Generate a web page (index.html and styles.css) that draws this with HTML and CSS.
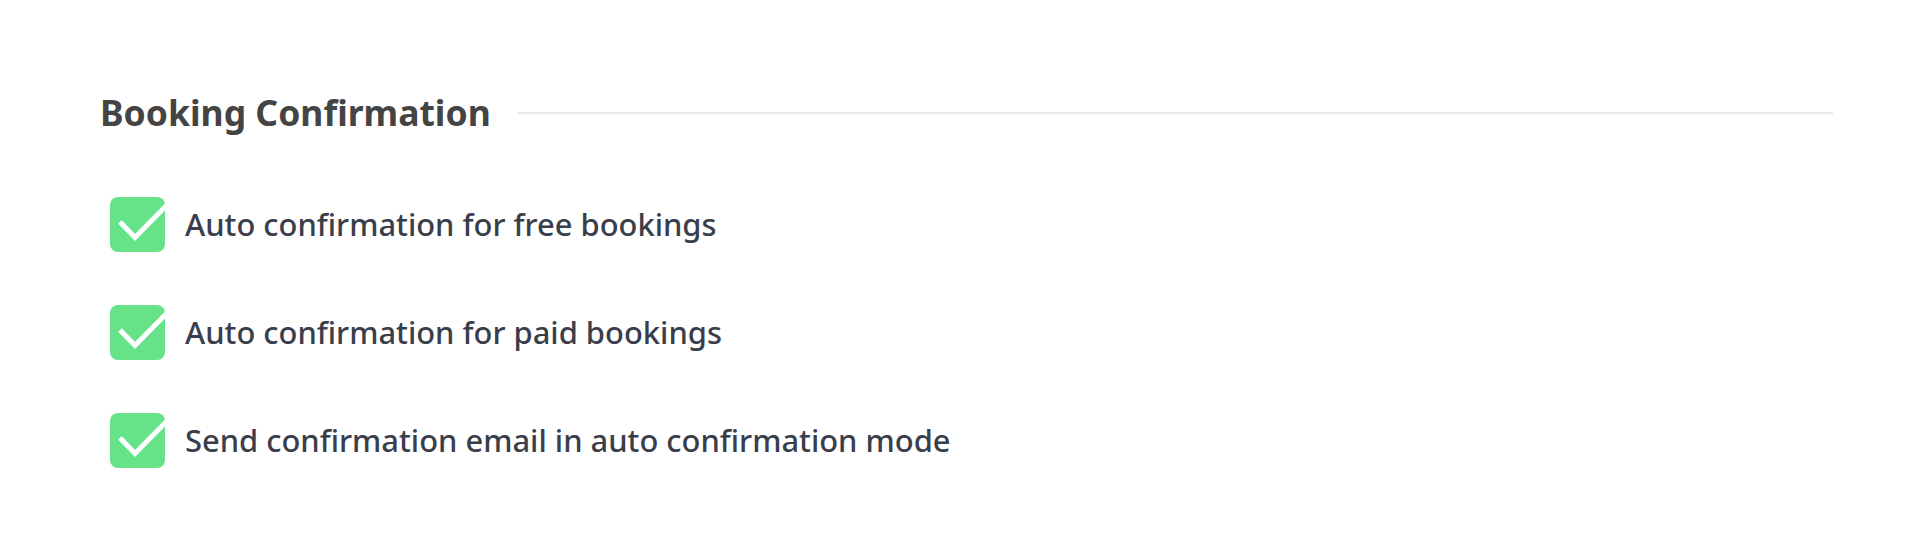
FILE: index.html
```html
<!DOCTYPE html>
<html lang="en">
<head>
<meta charset="utf-8">
<title>Booking Confirmation</title>
<link rel="stylesheet" href="styles.css">
</head>
<body>
<section class="panel">
  <div class="section-head">
    <h2 class="section-title">Booking Confirmation</h2>
    <div class="section-rule"></div>
  </div>
  <ul class="options">
    <li class="option">
      <svg class="check" viewBox="0 0 55 55" width="55" height="55"><defs><clipPath id="c1"><rect width="55" height="55" rx="8"/></clipPath></defs><rect width="55" height="55" rx="8" fill="#66e388"/><path d="M10 25 L25 40.5 L58 7" fill="none" stroke="#fff" stroke-width="5" clip-path="url(#c1)"/></svg>
      <span class="label">Auto confirmation for free bookings</span>
    </li>
    <li class="option">
      <svg class="check" viewBox="0 0 55 55" width="55" height="55"><defs><clipPath id="c2"><rect width="55" height="55" rx="8"/></clipPath></defs><rect width="55" height="55" rx="8" fill="#66e388"/><path d="M10 25 L25 40.5 L58 7" fill="none" stroke="#fff" stroke-width="5" clip-path="url(#c2)"/></svg>
      <span class="label">Auto confirmation for paid bookings</span>
    </li>
    <li class="option">
      <svg class="check" viewBox="0 0 55 55" width="55" height="55"><defs><clipPath id="c3"><rect width="55" height="55" rx="8"/></clipPath></defs><rect width="55" height="55" rx="8" fill="#66e388"/><path d="M10 25 L25 40.5 L58 7" fill="none" stroke="#fff" stroke-width="5" clip-path="url(#c3)"/></svg>
      <span class="label">Send confirmation email in auto confirmation mode</span>
    </li>
  </ul>
</section>
</body>
</html>
```
FILE: styles.css
```css
html, body {
  margin: 0;
  padding: 0;
  background: #ffffff;
}
body {
  font-family: "Noto Sans", "Open Sans", sans-serif;
}
.panel {
  padding: 86px 84px 0 100px;
}
.section-head {
  display: flex;
  align-items: center;
  gap: 26px;
  height: 54px;
}
.section-title {
  margin: 0;
  font-size: 35.5px;
  font-weight: 700;
  color: #444444;
  white-space: nowrap;
  line-height: 1;
}
.section-rule {
  flex: 1;
  height: 2px;
  background: #e9e9e9;
}
.options {
  list-style: none;
  margin: 0;
  padding: 0 0 0 10px;
  margin-top: 57px;
  display: flex;
  flex-direction: column;
  gap: 53px;
}
.option {
  display: flex;
  align-items: center;
  gap: 20px;
  height: 55px;
}
.check {
  flex: none;
  display: block;
}
.label {
  font-size: 30.9px;
  font-weight: 500;
  color: #3a3e4b;
  line-height: 1;
}
```
